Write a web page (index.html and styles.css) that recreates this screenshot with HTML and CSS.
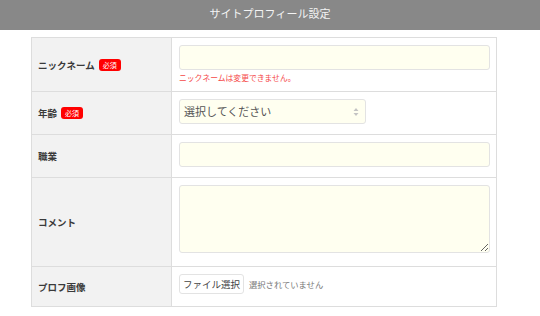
FILE: index.html
```html
<!DOCTYPE html>
<html lang="ja">
<head>
<meta charset="utf-8">
<link rel="stylesheet" href="styles.css">
</head>
<body>
<header class="topbar">サイトプロフィール設定</header>
<main class="wrap">
  <div class="form">
    <div class="label r1">ニックネーム<span class="req">必須</span></div>
    <div class="field r1">
      <div class="input"></div>
      <p class="err">ニックネームは変更できません。</p>
    </div>

    <div class="label">年齢<span class="req">必須</span></div>
    <div class="field">
      <div class="select">選択してください
        <svg class="arr" width="6" height="10" viewBox="0 0 6 10"><path d="M3 1 L5.5 4 H0.5 Z M3 9 L5.5 6 H0.5 Z" fill="#c4c4c4"/></svg>
      </div>
    </div>

    <div class="label">職業</div>
    <div class="field"><div class="input"></div></div>

    <div class="label">コメント</div>
    <div class="field"><textarea class="area"></textarea></div>

    <div class="label last">プロフ画像</div>
    <div class="field last">
      <div class="file"><span class="btn">ファイル選択</span><span class="none">選択されていません</span></div>
    </div>
  </div>
</main>
</body>
</html>
```

FILE: styles.css
```css
* { box-sizing: border-box; }
html, body { margin: 0; padding: 0; background: #fff; }
body { font-family: "Noto Sans CJK JP", "Noto Sans", sans-serif; color: #333; width: 540px; height: 316px; overflow: hidden; }
.topbar {
  height: 30px;
  background: #888;
  color: #f4f4f4;
  font-size: 11px;
  line-height: 26px;
  text-align: center;
}
.wrap { padding: 7px 43px 0 31px; }
.form {
  display: grid;
  grid-template-columns: 140px 1fr;
  grid-template-rows: 54px 43px 43px 89px 40px;
  border: 1px solid #ddd;
  border-bottom: 0;
}
.label {
  background: #f2f2f2;
  border-right: 1px solid #ddd;
  border-bottom: 1px solid #ddd;
  display: flex;
  align-items: center;
  padding-left: 6px;
  font-size: 9.5px;
  font-weight: bold;
  color: #3a3a3a;
}
.field {
  border-bottom: 1px solid #ddd;
  padding: 7px 6px 0 7px;
}
.req {
  display: inline-block;
  margin-left: 4px;
  background: #f00;
  color: #fff;
  font-size: 7px;
  line-height: 12px;
  height: 12px;
  padding: 0 4px;
  border-radius: 3px;
  font-weight: normal;
}
.input {
  height: 25px;
  background: #fffff0;
  border: 1px solid #e3e3e3;
  border-radius: 3px;
}
.err {
  margin: 2px 0 0;
  font-size: 7.8px;
  line-height: 12px;
  color: #f54848;
}
.select {
  width: 187px;
  height: 25px;
  background: #fffff0;
  border: 1px solid #e3e3e3;
  border-radius: 3px;
  font-size: 11px;
  line-height: 23px;
  padding-left: 4px;
  color: #555;
  display: flex;
  justify-content: space-between;
  align-items: center;
  padding-right: 6px;
}
.area {
  display: block;
  width: 100%;
  height: 68px;
  margin: 0;
  background: #fffff0;
  border: 1px solid #e3e3e3;
  border-radius: 3px;
  resize: vertical;
  outline: none;
}
.file { display: flex; align-items: center; }
.btn {
  display: inline-block;
  height: 20px;
  line-height: 18px;
  padding: 0 3px;
  border: 1px solid #e3e3e3;
  border-radius: 3px;
  background: #fff;
  font-size: 9.5px;
  color: #444;
}
.none { margin-left: 5px; font-size: 8.3px; color: #777; }
```
